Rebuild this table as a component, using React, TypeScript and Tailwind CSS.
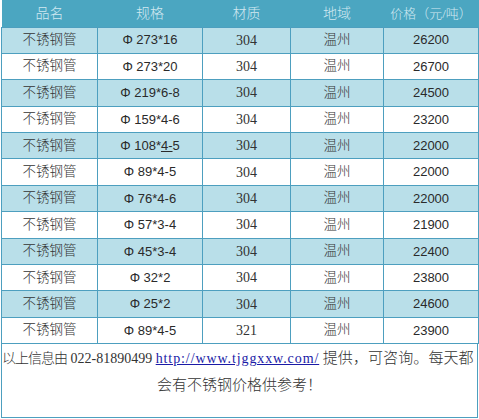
import React from "react";

type Row = {
  name: string;
  spec: React.ReactNode;
  material: string;
  region: string;
  price: string;
};

const rows: Row[] = [
  { name: "不锈钢管", spec: "Φ 273*16", material: "304", region: "温州", price: "26200" },
  { name: "不锈钢管", spec: "Φ 273*20", material: "304", region: "温州", price: "26700" },
  { name: "不锈钢管", spec: "Φ 219*6-8", material: "304", region: "温州", price: "24500" },
  { name: "不锈钢管", spec: "Φ 159*4-6", material: "304", region: "温州", price: "23200" },
  {
    name: "不锈钢管",
    spec: (
      <>
        Φ 108*<span className="underline">4-</span>5
      </>
    ),
    material: "304",
    region: "温州",
    price: "22000",
  },
  { name: "不锈钢管", spec: "Φ 89*4-5", material: "304", region: "温州", price: "22000" },
  { name: "不锈钢管", spec: "Φ 76*4-6", material: "304", region: "温州", price: "22000" },
  { name: "不锈钢管", spec: "Φ 57*3-4", material: "304", region: "温州", price: "21900" },
  { name: "不锈钢管", spec: "Φ 45*3-4", material: "304", region: "温州", price: "22400" },
  { name: "不锈钢管", spec: "Φ 32*2", material: "304", region: "温州", price: "23800" },
  { name: "不锈钢管", spec: "Φ 25*2", material: "304", region: "温州", price: "24600" },
  { name: "不锈钢管", spec: "Φ 89*4-5", material: "321", region: "温州", price: "23900" },
];

const serif = "font-['Liberation_Serif','Noto_Sans_CJK_SC',serif]";
const sans = "font-['Liberation_Sans','Noto_Sans_CJK_SC',sans-serif]";
const cell = "border border-[#4d9fbf] p-0 text-center";

export default function App() {
  return (
    <div className="w-[479px] h-[419px] bg-white pl-[1px] pr-[1px] text-[#2a2a2a]">
      <table className="table-fixed border-collapse w-[477px]">
        <colgroup>
          <col className="w-[96px]" />
          <col className="w-[105px]" />
          <col className="w-[88px]" />
          <col className="w-[93px]" />
          <col className="w-[95px]" />
        </colgroup>
        <thead>
          <tr className={`h-[27px] bg-[#4ba6c1] text-[#d2e9f1] text-[14px] font-light ${serif}`}>
            <th className="font-light p-0">品名</th>
            <th className="font-light p-0">规格</th>
            <th className="font-light p-0">材质</th>
            <th className="font-light p-0">地域</th>
            <th className="font-light p-0 whitespace-nowrap text-[13px]">价格（元/吨）</th>
          </tr>
        </thead>
        <tbody>
          {rows.map((r, i) => (
            <tr key={i} className={`h-[26.4px] ${i % 2 === 0 ? "bg-[#b9dfe9]" : "bg-white"}`}>
              <td className={`${cell} text-[13.5px] font-light text-[#333] ${serif}`}>{r.name}</td>
              <td className={`${cell} text-[13px] ${sans}`}>{r.spec}</td>
              <td className={`${cell} text-[14px] text-[#333] ${serif}`}>{r.material}</td>
              <td className={`${cell} text-[13.5px] font-light text-[#333] ${serif}`}>{r.region}</td>
              <td className={`${cell} text-[13px] ${sans}`}>{r.price}</td>
            </tr>
          ))}
        </tbody>
      </table>
      <div
        className={`h-[74px] border-l border-r border-b border-[#4d9fbf] text-[14px] leading-[26px] pt-[1px] text-center text-[#333] ${serif}`}
      >
        <div className="whitespace-nowrap text-left">
          <span className="font-light tracking-[-1px]">以上信息由</span> 022-81890499{" "}
          <a href="#" className="text-[#1a1aa6] underline tracking-[0.9px]">
            http://www.tjggxxw.com/
          </a>{" "}
          <span className="font-light text-[15px] tracking-[0.1px]">提供，可咨询。每天都</span>
        </div>
        <div className="font-light text-[15px]">会有不锈钢价格供参考！</div>
      </div>
    </div>
  );
}
